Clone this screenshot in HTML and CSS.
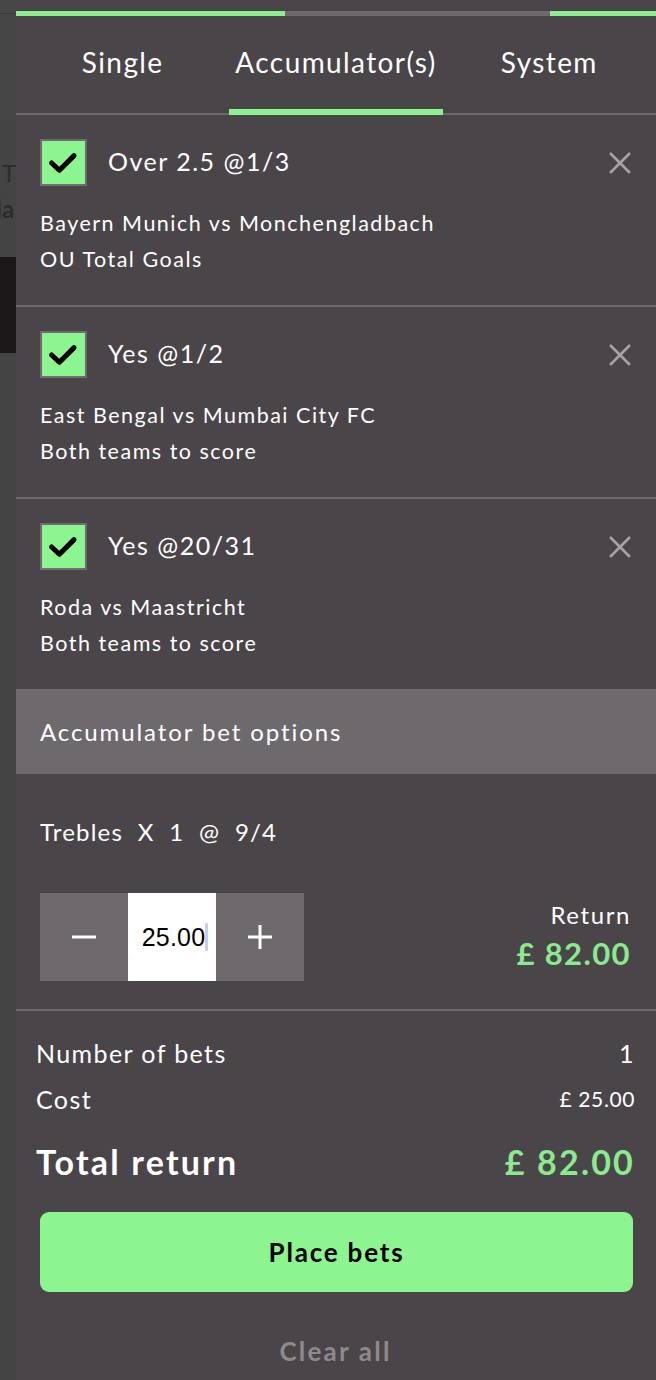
FILE: index.html
```html
<!DOCTYPE html>
<html>
<head>
<meta charset="utf-8">
<link rel="stylesheet" href="styles.css">
</head>
<body>
<div class="bgpage">
  <div class="bg-top"></div>
  <div class="bg-text">
    <span class="bg-t1">T</span>
    <span class="bg-t2">la</span>
  </div>
  <div class="bg-black"></div>
  <div class="bg-rest"></div>
</div>
<div class="slip">
  <div class="progress">
    <div class="prog-a"></div>
    <div class="prog-b"></div>
    <div class="prog-c"></div>
  </div>
  <div class="tabs">
    <div class="tab">Single</div>
    <div class="tab active">Accumulator(s)</div>
    <div class="tab">System</div>
  </div>

  <div class="bet">
    <div class="bet-head">
      <div class="check"><svg viewBox="0 0 47 47" width="43" height="43"><path d="M10.5 24 L19 32 L35 16" fill="none" stroke="#000" stroke-width="5.5" stroke-linecap="round" stroke-linejoin="round"/></svg></div>
      <div class="bet-title">Over 2.5 @1/3</div>
      <svg class="close" viewBox="0 0 24 24" width="24" height="24"><path d="M2 2 L22 22 M22 2 L2 22" stroke="#a7a3a5" stroke-width="2.6"/></svg>
    </div>
    <div class="bet-line">Bayern Munich vs Monchengladbach</div>
    <div class="bet-line">OU Total Goals</div>
  </div>

  <div class="bet">
    <div class="bet-head">
      <div class="check"><svg viewBox="0 0 47 47" width="43" height="43"><path d="M10.5 24 L19 32 L35 16" fill="none" stroke="#000" stroke-width="5.5" stroke-linecap="round" stroke-linejoin="round"/></svg></div>
      <div class="bet-title">Yes @1/2</div>
      <svg class="close" viewBox="0 0 24 24" width="24" height="24"><path d="M2 2 L22 22 M22 2 L2 22" stroke="#a7a3a5" stroke-width="2.6"/></svg>
    </div>
    <div class="bet-line">East Bengal vs Mumbai City FC</div>
    <div class="bet-line">Both teams to score</div>
  </div>

  <div class="bet last">
    <div class="bet-head">
      <div class="check"><svg viewBox="0 0 47 47" width="43" height="43"><path d="M10.5 24 L19 32 L35 16" fill="none" stroke="#000" stroke-width="5.5" stroke-linecap="round" stroke-linejoin="round"/></svg></div>
      <div class="bet-title">Yes @20/31</div>
      <svg class="close" viewBox="0 0 24 24" width="24" height="24"><path d="M2 2 L22 22 M22 2 L2 22" stroke="#a7a3a5" stroke-width="2.6"/></svg>
    </div>
    <div class="bet-line">Roda vs Maastricht</div>
    <div class="bet-line">Both teams to score</div>
  </div>

  <div class="band">Accumulator bet options</div>

  <div class="acc">
    <div class="acc-title">Trebles&nbsp; X&nbsp; 1&nbsp; @&nbsp; 9/4</div>
    <div class="acc-row">
      <div class="stepper">
        <div class="step-btn"><svg viewBox="0 0 24 24" width="24" height="24"><path d="M0 12 H24" stroke="#fff" stroke-width="3"/></svg></div>
        <div class="step-input">25.00<span class="caret"></span></div>
        <div class="step-btn"><svg viewBox="0 0 24 24" width="24" height="24"><path d="M0 12 H24 M12 0 V24" stroke="#fff" stroke-width="3"/></svg></div>
      </div>
      <div class="ret">
        <div class="ret-label">Return</div>
        <div class="ret-value">£ 82.00</div>
      </div>
    </div>
  </div>

  <div class="summary">
    <div class="sum-row"><span>Number of bets</span><span>1</span></div>
    <div class="sum-row"><span>Cost</span><span class="small">£ 25.00</span></div>
    <div class="sum-row total"><span>Total return</span><span class="green">£ 82.00</span></div>
    <button class="place">Place bets</button>
    <div class="clear">Clear all</div>
  </div>
</div>
</body>
</html>
```

FILE: styles.css
```css
* { box-sizing: border-box; }
html, body { margin: 0; padding: 0; }
body {
  width: 656px;
  height: 1380px;
  overflow: hidden;
  display: flex;
  background: #444444;
  font-family: Lato, "Open Sans", sans-serif;
  color: #ffffff;
}
.bgpage {
  width: 16px;
  flex: none;
  display: flex;
  flex-direction: column;
  overflow: hidden;
}
.bg-top {
  height: 120px;
  background: #464646;
  border-top: 13px solid #474747;
  box-shadow: inset 0 1px 0 #3c3c3c;
}
.bg-text {
  height: 137px;
  background: #444;
  display: flex;
  flex-direction: column;
  padding-top: 35px;
  color: #2c2c2c;
  font-size: 24px;
  line-height: 36px;
  white-space: nowrap;
}
.bg-t1 { margin-left: 2px; }
.bg-t2 { margin-left: -4px; font-weight: 700; }
.bg-black { height: 96px; background: #1a1718; }
.bg-rest { flex: 1; background: #444444; }

.slip {
  flex: 1;
  background: #4a4548;
  display: flex;
  flex-direction: column;
}
.progress {
  display: flex;
  height: 16px;
  padding-top: 11px;
}
.prog-a { width: 269px; background: #8cf08f; }
.prog-b { width: 265px; background: #6e696c; }
.prog-c { flex: 1; background: #8cf08f; }

.tabs {
  display: grid;
  grid-template-columns: 1fr 1fr 1fr;
}
.tab {
  height: 99px;
  border-bottom: 2px solid #6e696c;
  text-align: center;
  font-size: 28px;
  line-height: 36px;
  padding-top: 28px;
  letter-spacing: 1.4px;
}
.tab.active { border-bottom: 6px solid #8cf08f; }

.bet {
  height: 192px;
  border-bottom: 2px solid #6e696c;
  padding: 24px 25px 0 24px;
}
.bet.last { height: 190px; border-bottom: 0; }
.bet-head {
  display: flex;
  align-items: center;
  height: 47px;
  margin-bottom: 19px;
}
.check {
  width: 47px;
  height: 47px;
  background: #8df590;
  border: 2px solid #6f6b6d;
  display: flex;
  align-items: center;
  justify-content: center;
}
.bet-title {
  flex: 1;
  margin-left: 21px;
  font-size: 25px;
  letter-spacing: 1.5px;
  margin-top: -3px;
}
.close { flex: none; margin-right: -1px; }
.bet-line {
  font-size: 21.5px;
  line-height: 36px;
  letter-spacing: 1.5px;
}

.band {
  height: 85px;
  background: #6e696c;
  padding-left: 24px;
  display: flex;
  align-items: center;
  font-size: 24px;
  letter-spacing: 1.9px;
}
.acc {
  padding: 40px 25px 0 24px;
}
.acc-title {
  font-size: 24px;
  line-height: 36px;
  letter-spacing: 1.2px;
}
.acc-row {
  margin-top: 43px;
  display: flex;
  justify-content: space-between;
}
.stepper {
  display: flex;
  height: 88px;
}
.step-btn {
  width: 88px;
  background: #6e696c;
  display: flex;
  align-items: center;
  justify-content: center;
}
.step-input {
  width: 88px;
  background: #ffffff;
  color: #000;
  display: flex;
  align-items: center;
  justify-content: center;
  font-size: 25px;
  font-family: "Liberation Sans", Arial, sans-serif;
  letter-spacing: 0.2px;
  padding-left: 6px;
}
.caret {
  width: 3px;
  height: 28px;
  background: #c7cff0;
  margin-left: 0;
  border-radius: 1px;
}
.ret {
  text-align: right;
  padding-top: 7px;
}
.ret-label {
  font-size: 24px;
  line-height: 30px;
  letter-spacing: 1.6px;
}
.ret-value {
  font-size: 31px;
  font-weight: 700;
  line-height: 46px;
  color: #8be98e;
  letter-spacing: 1.4px;
}

.summary {
  margin-top: 28px;
  border-top: 2px solid #6e696c;
  padding: 19px 21px 0 20px;
  display: flex;
  flex-direction: column;
}
.sum-row {
  display: flex;
  justify-content: space-between;
  align-items: center;
  font-size: 25px;
  line-height: 46px;
  letter-spacing: 1.4px;
}
.sum-row .small { font-size: 21px; letter-spacing: 0.6px; }
.sum-row.total {
  font-size: 34px;
  font-weight: 700;
  line-height: 64px;
  margin-top: 8px;
  letter-spacing: 2.2px;
}
.green { color: #8be98e; }
.place {
  margin: 18px 2px 0 4px;
  height: 80px;
  border: 0;
  border-radius: 9px;
  background: #8df590;
  color: #000;
  font-family: inherit;
  font-size: 26px;
  font-weight: 700;
  letter-spacing: 1.8px;
}
.clear {
  margin-top: 41px;
  text-align: center;
  font-size: 26px;
  font-weight: 700;
  color: #8e8a8c;
  line-height: 36px;
  letter-spacing: 2.2px;
}
```
